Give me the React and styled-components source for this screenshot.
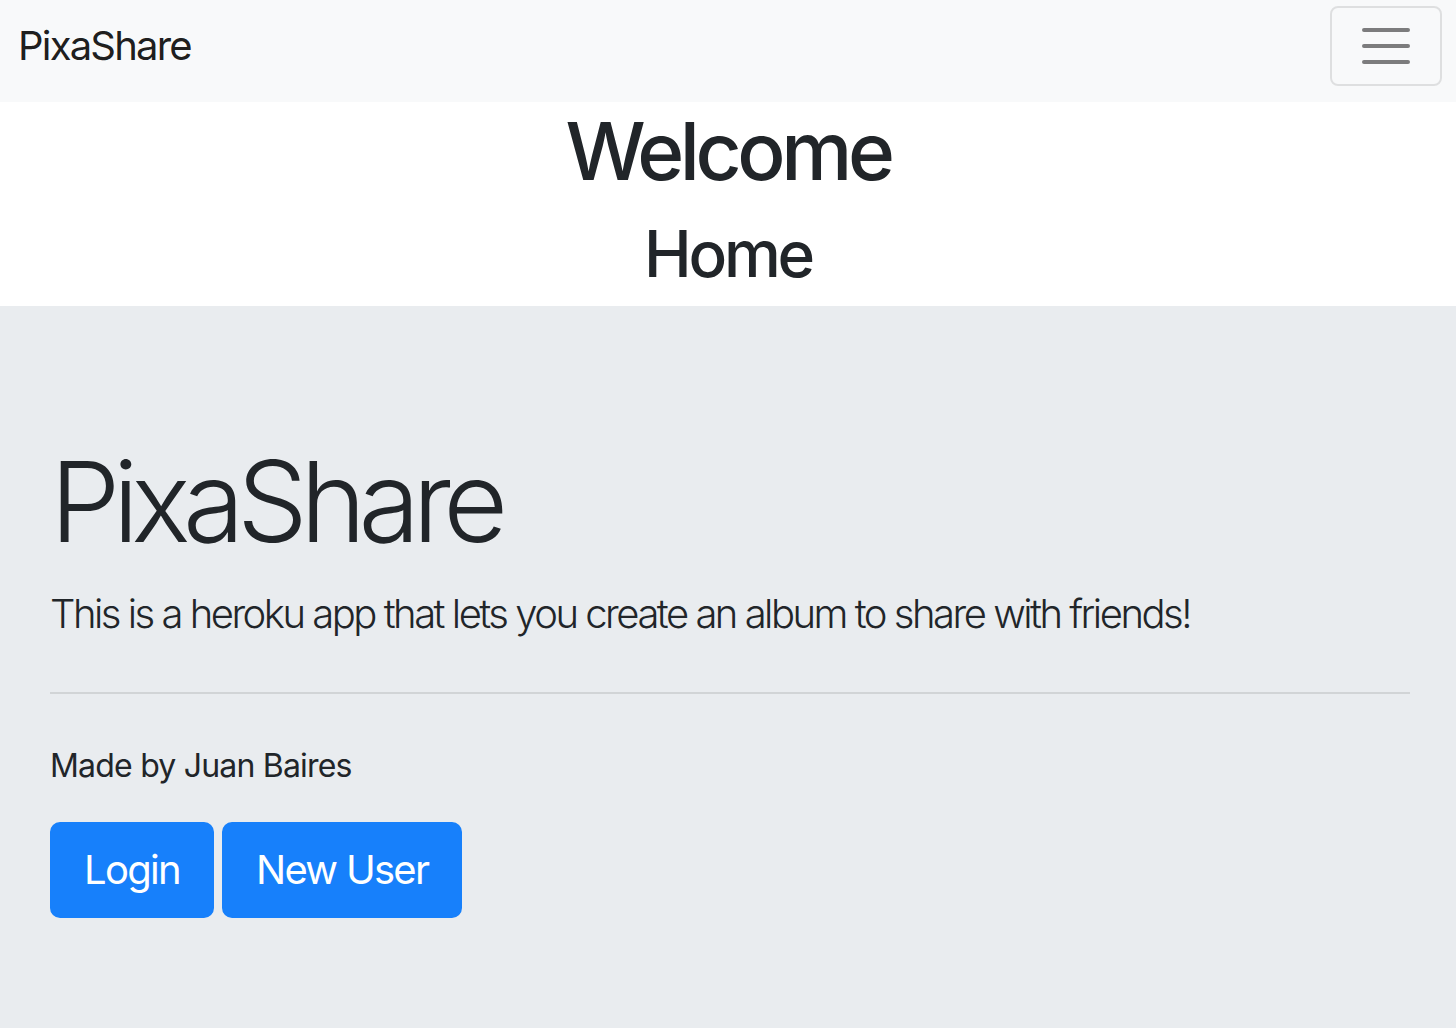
import styled, { createGlobalStyle } from "styled-components";

const GlobalStyle = createGlobalStyle`
  html, body {
    margin: 0;
    padding: 0;
    background: #fff;
  }
  body {
    font-family: Inter, "Helvetica Neue", "Liberation Sans", Arial, sans-serif;
    color: #212529;
  }
  * {
    box-sizing: border-box;
  }
`;

const Navbar = styled.nav`
  height: 102px;
  background: #f8f9fa;
  display: flex;
  align-items: center;
  justify-content: space-between;
  padding: 6px 14px 16px 18px;
`;

const Brand = styled.a`
  font-size: 40px;
  line-height: 60px;
  color: rgba(0, 0, 0, 0.9);
  text-decoration: none;
  letter-spacing: -1.8px;
`;

const Toggler = styled.button`
  width: 112px;
  height: 80px;
  padding: 8px 24px;
  background: transparent;
  border: 2px solid rgba(0, 0, 0, 0.1);
  border-radius: 8px;
  display: flex;
  align-items: center;
  justify-content: center;
  cursor: pointer;
`;

const HeaderSection = styled.header`
  height: 204px;
  padding-top: 1px;
  text-align: center;
`;

const Title = styled.h1`
  margin: 0 0 16px;
  font-size: 80px;
  font-weight: 500;
  line-height: 96px;
  letter-spacing: -4.4px;
`;

const SubTitle = styled.h2`
  margin: 0;
  font-size: 64px;
  font-weight: 500;
  line-height: 77px;
  letter-spacing: -3.2px;
`;

const Jumbotron = styled.section`
  background: #e9ecef;
  padding: 128px 46px 128px 50px;
`;

const Display = styled.h1`
  margin: 0 0 16px;
  font-size: 112px;
  font-weight: 300;
  line-height: 134px;
  letter-spacing: -7.6px;
`;

const Lead = styled.p`
  margin: 0;
  font-size: 40px;
  font-weight: 300;
  line-height: 60px;
  letter-spacing: -2.5px;
`;

const Divider = styled.hr`
  margin: 48px 0;
  border: 0;
  border-top: 2px solid rgba(0, 0, 0, 0.1);
`;

const Credit = styled.p`
  margin: 0 0 32px;
  font-size: 32px;
  line-height: 48px;
  letter-spacing: -0.8px;
`;

const ButtonRow = styled.div`
  display: flex;
  gap: 8px;
`;

const Button = styled.a`
  display: inline-block;
  padding: 16px 32px;
  font-size: 40px;
  line-height: 60px;
  color: #fff;
  background: #1780fb;
  border: 2px solid #1780fb;
  border-radius: 10px;
  text-decoration: none;
  letter-spacing: -1.7px;
  cursor: pointer;
`;

const TogglerIcon = () => (
  <svg width="60" height="60" viewBox="0 0 30 30">
    <path
      d="M4 7h22M4 15h22M4 23h22"
      stroke="rgba(0,0,0,0.5)"
      strokeWidth="2"
      strokeLinecap="round"
    />
  </svg>
);

export default function App() {
  return (
    <>
      <GlobalStyle />
      <Navbar>
        <Brand href="#">PixaShare</Brand>
        <Toggler aria-label="Toggle navigation">
          <TogglerIcon />
        </Toggler>
      </Navbar>
      <HeaderSection>
        <Title>Welcome</Title>
        <SubTitle>Home</SubTitle>
      </HeaderSection>
      <Jumbotron>
        <Display>PixaShare</Display>
        <Lead>This is a heroku app that lets you create an album to share with friends!</Lead>
        <Divider />
        <Credit>Made by Juan Baires</Credit>
        <ButtonRow>
          <Button href="#">Login</Button>
          <Button href="#">New User</Button>
        </ButtonRow>
      </Jumbotron>
    </>
  );
}
